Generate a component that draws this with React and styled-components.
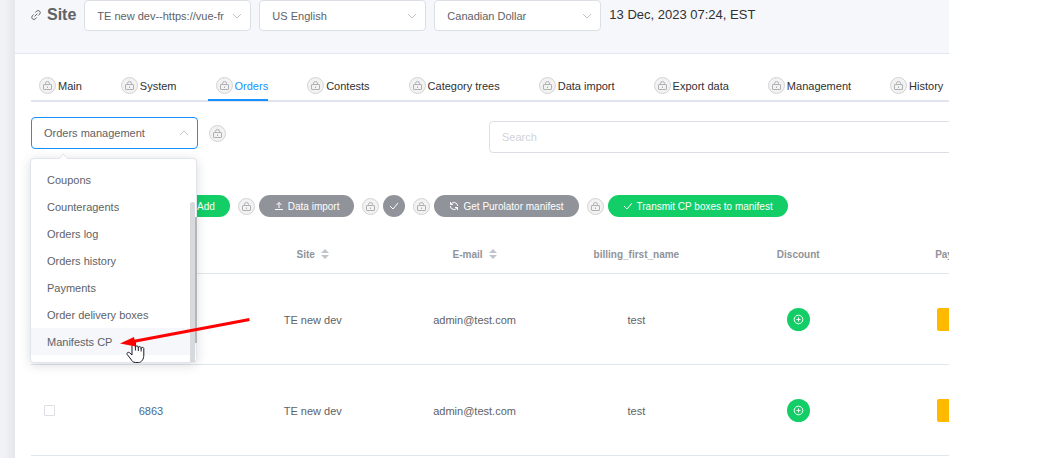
import React, { useState } from 'react';
import styled, { createGlobalStyle, css } from 'styled-components';

const GlobalStyle = createGlobalStyle`
  *,
  *::before,
  *::after {
    box-sizing: border-box;
  }

  body {
    margin: 0;
    background: #fff;
    color: #303133;
    font-family: "Liberation Sans", Arial, sans-serif;
    font-size: 11px;
  }

  button,
  input,
  select {
    font-family: inherit;
  }

  svg {
    flex-shrink: 0;
  }
`;

const Page = styled.div`
  padding: 0 105px 8px 0;
`;

const Frame = styled.div`
  display: flex;
  overflow: hidden;
`;

const Rail = styled.div`
  flex: 0 0 15px;
  background: linear-gradient(to right, #f0f2f5 30%, #e4e6ea);
`;

const Main = styled.main`
  flex: 1;
  min-width: 0;
  padding-bottom: 2px;
`;

const Header = styled.header`
  display: flex;
  align-items: flex-start;
  gap: 8px;
  height: 54px;
  padding-left: 16px;
  background: #f5f7fb;
  border-bottom: 1px solid #e2e6f0;
`;

const Title = styled.h1`
  display: flex;
  align-items: center;
  gap: 6px;
  height: 30px;
  margin: 0;
  color: #606266;
  font-size: 16px;
  font-weight: 700;
`;

const DateText = styled.time`
  line-height: 30px;
  font-size: 13px;
  white-space: nowrap;
`;

const SelectWrap = styled.div`
  position: relative;
  flex: 0 0 auto;
  width: 167px;
`;

const StyledSelect = styled.select`
  display: block;
  width: 100%;
  height: ${({ $active }) => ($active ? '32px' : '31px')};
  padding: 0 24px 0 12px;
  appearance: none;
  background: #fff;
  border: 1px solid ${({ $active }) => ($active ? '#1890ff' : '#dcdfe6')};
  border-radius: 4px;
  color: #606266;
  font-size: 11px;
  outline: none;
`;

const Caret = styled.svg`
  position: absolute;
  top: 50%;
  right: 9px;
  margin-top: -5px;
  pointer-events: none;
`;

const Content = styled.div`
  padding: 20px 0 0 16px;
`;

const Tabs = styled.nav`
  display: flex;
  gap: 31px;
  border-bottom: 2px solid #dfe4ed;
`;

const Tab = styled.a`
  display: flex;
  flex: 0 0 auto;
  align-items: center;
  gap: 2px;
  height: 27px;
  margin-bottom: -1px;
  padding: 0 0 2px 8px;
  border-bottom: 2px solid transparent;
  color: #303133;
  text-decoration: none;
  white-space: nowrap;

  ${({ $active }) =>
    $active &&
    css`
      color: #1890ff;
      border-color: #1890ff;
    `}
`;

const Filters = styled.div`
  display: flex;
  align-items: flex-start;
  gap: 11px;
  padding-top: 15px;
`;

const FilterLock = styled.span`
  display: flex;
  align-items: center;
  height: 32px;
`;

const SearchInput = styled.input`
  flex: 0 0 500px;
  height: 32px;
  margin: 4px 0 0 252px;
  padding: 0 12px;
  border: 1px solid #dcdfe6;
  border-radius: 4px;
  font-size: 11px;
  outline: none;

  &::placeholder {
    color: #d0d3da;
  }
`;

const Menu = styled.div`
  position: absolute;
  z-index: 2;
  top: 41px;
  left: -1px;
  width: 167px;
  padding: 7px 0;
  background: #fff;
  border: 1px solid #dfe4ed;
  border-radius: 4px;
  box-shadow: 0 2px 12px rgba(0, 0, 0, 0.14);

  &::before {
    content: "";
    position: absolute;
    top: -4px;
    left: 29px;
    width: 7px;
    height: 7px;
    background: #fff;
    border: solid #e4e7ed;
    border-width: 1px 0 0 1px;
    transform: rotate(45deg);
  }
`;

const Scrollbar = styled.span`
  position: absolute;
  top: 43px;
  right: 1px;
  bottom: 0;
  width: 5px;
  background: #d8d9dc;
  border-radius: 3px 3px 0 0;

  &::after {
    content: "";
    position: absolute;
    top: 15px;
    right: -2px;
    bottom: 19px;
    width: 2px;
    background: #b4b6ba;
  }
`;

const Option = styled.button`
  display: block;
  width: 100%;
  height: 27px;
  padding: 0 16px;
  background: ${({ $active }) => ($active ? '#f5f7fb' : 'transparent')};
  border: 0;
  color: #606266;
  font-size: 11px;
  text-align: left;
`;

const Pointer = styled.svg`
  position: absolute;
  z-index: 3;
  top: 198px;
  left: 84px;
  pointer-events: none;
`;

const Actions = styled.div`
  display: flex;
  align-items: center;
  gap: 8px;
  padding: 42px 0 0 116px;
`;

const Action = styled.div`
  display: flex;
  flex: 0 0 auto;
  align-items: center;
  gap: 4px;
`;

const Pill = styled.button`
  display: flex;
  align-items: center;
  justify-content: center;
  gap: 4px;
  height: 22px;
  min-width: 22px;
  padding: ${({ $round }) => ($round ? '0' : '0 15px')};
  background: ${({ $green }) => ($green ? '#13ce66' : '#909399')};
  border: 0;
  border-radius: 11px;
  color: #fff;
  font-size: 10px;
  white-space: nowrap;
`;

const Table = styled.table`
  width: 1010px;
  margin-top: 17px;
  border-collapse: collapse;
  table-layout: fixed;
  color: #606266;
`;

const Th = styled.th`
  height: 39px;
  padding: 2px 0 0;
  border-bottom: 1px solid #dfe6ec;
  color: #909399;
  font-size: 10px;
  font-weight: 700;
  text-align: center;
`;

const Td = styled.td`
  height: 91px;
  padding: 2px 0 0;
  border-bottom: 1px solid #dfe6ec;
  font-size: 11px;
  text-align: center;
`;

const CheckTh = styled(Th)`
  width: 39px;
`;

const SortLabel = styled.span`
  display: inline-flex;
  align-items: center;
  gap: 6px;
`;

const OrderLink = styled.a`
  color: #4a6b92;
  text-decoration: none;
`;

const Checkbox = styled.input`
  display: block;
  width: 11px;
  height: 11px;
  margin: 0 0 0 13px;
  appearance: none;
  background: #fff;
  border: 1px solid #dcdfe6;
  border-radius: 1px;
`;

const RoundButton = styled.button`
  display: flex;
  align-items: center;
  justify-content: center;
  width: 23px;
  height: 23px;
  margin: 0 auto;
  padding: 0;
  background: #13ce66;
  border: 0;
  border-radius: 50%;
`;

const PayButton = styled.button`
  display: block;
  width: 46px;
  height: 23px;
  margin: 0 auto;
  background: #ffba00;
  border: 0;
  border-radius: 2px;
`;

const PayLabel = styled.span`
  display: block;
  padding-left: 56px;
  text-align: left;
`;

const LockIcon = () => (
  <svg width="17" height="17" viewBox="0 0 17 17" fill="none" stroke="#aeb0b4">
    <circle cx="8.5" cy="8.5" r="8" fill="#f2f2f2" stroke="#d3d3d3" />
    <rect x="4.5" y="7.5" width="8" height="5" rx="0.5" />
    <path d="M6.5 7.5V6.500a2 2 0 0 1 4 0v1M8.5 9.500v1.500" />
  </svg>
);

const LinkIcon = () => (
  <svg width="10" height="10" viewBox="0 0 10 10" fill="none" stroke="#606266">
    <path d="M4.2 2.6 5.6 1.2a2 2 0 0 1 3 3L7.2 5.6M5.8 7.4 4.4 8.8a2 2 0 0 1-3-3L2.8 4.4M3.6 6.4l2.8-2.8" />
  </svg>
);

const ChevronIcon = ({ up }) => (
  <Caret width="10" height="10" viewBox="0 0 10 10" fill="none" stroke="#c0c4cc">
    <path d={up ? 'M1 7l4-4 4 4' : 'M1 3l4 4 4-4'} />
  </Caret>
);

const icons = {
  plus: 'M5 1v8M1 5h8',
  upload: 'M1 8.5h8M5 7V1.5M2.5 4 5 1.5 7.5 4',
  check: 'M1 5l3 3 5-6',
  refresh:
    'M1.5 1v2.5H4M1.7 3.5A3.7 3.7 0 0 1 8.7 5M8.5 9V6.5H6M8.3 6.5A3.7 3.7 0 0 1 1.3 5',
};

const ActionIcon = ({ name }) => (
  <svg width="10" height="10" viewBox="0 0 10 10" fill="none" stroke="#fff">
    <path d={icons[name]} />
  </svg>
);

const CirclePlusIcon = () => (
  <svg width="11" height="11" viewBox="0 0 11 11" fill="none" stroke="#fff">
    <circle cx="5.5" cy="5.5" r="4.3" />
    <path d="M5.5 3.5v4M3.5 5.5h4" />
  </svg>
);

const SortIcon = () => (
  <svg width="8" height="10" viewBox="0 0 8 10" fill="#c0c4cc">
    <path d="M0 4l4-4 4 4zM0 6h8l-4 4z" />
  </svg>
);

const PointerDrawing = () => (
  <Pointer width="140" height="52" viewBox="0 0 140 52" fill="none">
    <path
      d="M17 40V28a1.7 1.7 0 0 1 3.4 0v4a1.5 1.5 0 0 1 2.9 0v.6a1.5 1.5 0 0 1 2.8 0v.8a1.4 1.4 0 0 1 2.7 0V40c0 4-2 7.5-5.5 7.5h-3c-2 0-3.5-1.5-4.5-3.5L12.2 39.5c-.8-1.8 1-2.8 2.5-1.7z"
      fill="#fff"
      stroke="#1c1c2c"
    />
    <path d="M20.4 31v4.5M23.3 32v4M26.1 33v3.5" stroke="#1c1c2c" />
    <path d="M134.5 4.5 18 26.5" stroke="#f00" strokeWidth="3" />
    <path d="M5 28.5 19 22l2 9.500z" fill="#f00" />
  </Pointer>
);

const tabs = [
  'Main',
  'System',
  'Orders',
  'Contests',
  'Category trees',
  'Data import',
  'Export data',
  'Management',
  'History',
];

const options = [
  'Coupons',
  'Counteragents',
  'Orders log',
  'Orders history',
  'Payments',
  'Order delivery boxes',
  'Manifests CP',
];

const actions = [
  { label: 'Add', icon: 'plus', green: true },
  { label: 'Data import', icon: 'upload' },
  { icon: 'check' },
  { label: 'Get Purolator manifest', icon: 'refresh' },
  { label: 'Transmit CP boxes to manifest', icon: 'check', green: true },
];

const orders = [
  { id: '', site: 'TE new dev', email: 'admin@test.com', name: 'test' },
  { id: '6863', site: 'TE new dev', email: 'admin@test.com', name: 'test' },
];

const Select = ({ label, value }) => (
  <SelectWrap>
    <StyledSelect aria-label={label} defaultValue={value}>
      <option>{value}</option>
    </StyledSelect>
    <ChevronIcon />
  </SelectWrap>
);

const SectionSelect = () => {
  const [hovered, setHovered] = useState('Manifests CP');

  return (
    <SelectWrap>
      <StyledSelect $active aria-label="Section">
        <option>Orders management</option>
      </StyledSelect>
      <ChevronIcon up />
      <Menu>
        {options.map((name) => (
          <Option
            key={name}
            type="button"
            $active={name === hovered}
            onMouseEnter={() => setHovered(name)}
          >
            {name}
          </Option>
        ))}
        <Scrollbar />
      </Menu>
      <PointerDrawing />
    </SelectWrap>
  );
};

const OrdersTable = () => (
  <Table>
    <thead>
      <tr>
        <CheckTh />
        <Th />
        <Th>
          <SortLabel>
            Site <SortIcon />
          </SortLabel>
        </Th>
        <Th>
          <SortLabel>
            E-mail <SortIcon />
          </SortLabel>
        </Th>
        <Th>billing_first_name</Th>
        <Th>Discount</Th>
        <Th>
          <PayLabel>Pay</PayLabel>
        </Th>
      </tr>
    </thead>
    <tbody>
      {orders.map(({ id, site, email, name }) => (
        <tr key={id}>
          <Td>
            <Checkbox type="checkbox" aria-label="Select order" />
          </Td>
          <Td>{id && <OrderLink href="#order">{id}</OrderLink>}</Td>
          <Td>{site}</Td>
          <Td>{email}</Td>
          <Td>{name}</Td>
          <Td>
            <RoundButton type="button" aria-label="Add discount">
              <CirclePlusIcon />
            </RoundButton>
          </Td>
          <Td>
            <PayButton type="button" aria-label="Pay" />
          </Td>
        </tr>
      ))}
    </tbody>
  </Table>
);

const App = () => (
  <Page>
    <GlobalStyle />
    <Frame>
      <Rail />
      <Main>
        <Header>
          <Title>
            <LinkIcon />
            Site
          </Title>
          <Select label="Site" value="TE new dev--https://vue-fr" />
          <Select label="Language" value="US English" />
          <Select label="Currency" value="Canadian Dollar" />
          <DateText>13 Dec, 2023 07:24, EST</DateText>
        </Header>
        <Content>
          <Tabs>
            {tabs.map((name) => (
              <Tab key={name} href="#tab" $active={name === 'Orders'}>
                <LockIcon />
                {name}
              </Tab>
            ))}
          </Tabs>
          <Filters>
            <SectionSelect />
            <FilterLock>
              <LockIcon />
            </FilterLock>
            <SearchInput type="text" placeholder="Search" aria-label="Search" />
          </Filters>
          <Actions>
            {actions.map(({ label, icon, green }) => (
              <Action key={label || icon}>
                <LockIcon />
                <Pill type="button" $green={green} $round={!label} aria-label={label || 'Apply'}>
                  <ActionIcon name={icon} />
                  {label}
                </Pill>
              </Action>
            ))}
          </Actions>
          <OrdersTable />
        </Content>
      </Main>
    </Frame>
  </Page>
);

export default App;
